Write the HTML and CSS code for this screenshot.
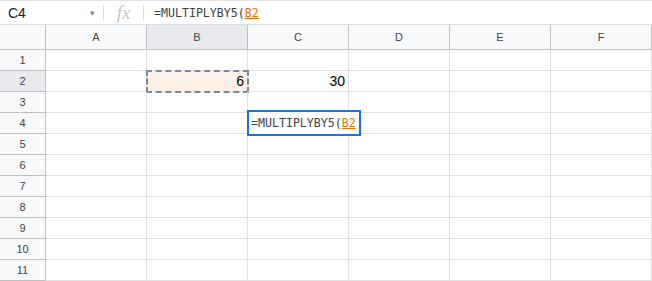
FILE: index.html
```html
<html>
<head>
<meta charset="utf-8"/>
<title>Sheet</title>
<link rel="stylesheet" href="styles.css">
</head>
<body>

<div class="fbar">
	<div class="namebox">C4<span class="caret">&#9662;</span></div>
	<div class="sep"></div>
	<div class="fx">fx</div>
	<div class="sep"></div>
	<div class="ftext">=MULTIPLYBY5(<span class="ref">B2</span></div>
</div>

<div class="grid">
	<div class="corner"></div>
	<div class="colh">A</div>
	<div class="colh sel">B</div>
	<div class="colh">C</div>
	<div class="colh">D</div>
	<div class="colh">E</div>
	<div class="colh">F</div>

	<div class="rowh">1</div>
	<div class="cell"></div><div class="cell"></div><div class="cell"></div><div class="cell"></div><div class="cell"></div><div class="cell"></div>

	<div class="rowh sel">2</div>
	<div class="cell"></div><div class="cell copy">6</div><div class="cell">30</div><div class="cell"></div><div class="cell"></div><div class="cell"></div>

	<div class="rowh">3</div>
	<div class="cell"></div><div class="cell"></div><div class="cell"></div><div class="cell"></div><div class="cell"></div><div class="cell"></div>

	<div class="rowh">4</div>
	<div class="cell"></div><div class="cell"></div><div class="cell active"><div class="editor">=MULTIPLYBY5(<span class="ref">B2</span></div></div><div class="cell"></div><div class="cell"></div><div class="cell"></div>

	<div class="rowh">5</div>
	<div class="cell"></div><div class="cell"></div><div class="cell"></div><div class="cell"></div><div class="cell"></div><div class="cell"></div>

	<div class="rowh">6</div>
	<div class="cell"></div><div class="cell"></div><div class="cell"></div><div class="cell"></div><div class="cell"></div><div class="cell"></div>

	<div class="rowh">7</div>
	<div class="cell"></div><div class="cell"></div><div class="cell"></div><div class="cell"></div><div class="cell"></div><div class="cell"></div>

	<div class="rowh">8</div>
	<div class="cell"></div><div class="cell"></div><div class="cell"></div><div class="cell"></div><div class="cell"></div><div class="cell"></div>

	<div class="rowh">9</div>
	<div class="cell"></div><div class="cell"></div><div class="cell"></div><div class="cell"></div><div class="cell"></div><div class="cell"></div>

	<div class="rowh">10</div>
	<div class="cell"></div><div class="cell"></div><div class="cell"></div><div class="cell"></div><div class="cell"></div><div class="cell"></div>

	<div class="rowh">11</div>
	<div class="cell"></div><div class="cell"></div><div class="cell"></div><div class="cell"></div><div class="cell"></div><div class="cell"></div>
</div>

</body>
</html>
```

FILE: styles.css
```css
body {
	margin: 0;
	font-family: "Liberation Sans", Arial, sans-serif;
	background: #fff;
	color: #000;
}
/* formula bar */
.fbar {
	display: flex;
	align-items: center;
	height: 23px;
	border-top: 1px solid #e0e0e0;
	border-bottom: 1px solid #dadce0;
}
.namebox {
	width: 103px;
	box-sizing: border-box;
	padding-left: 8px;
	font-size: 14px;
	color: #202124;
	display: flex;
	align-items: center;
}
.caret {
	margin-left: auto;
	margin-right: 8px;
	font-size: 9px;
	color: #80868b;
}
.sep {
	width: 1px;
	height: 16px;
	background: #dadce0;
}
.fx {
	width: 39px;
	text-align: center;
	font-family: "Liberation Serif", serif;
	font-style: italic;
	font-size: 19px;
	color: #c4c7c5;
}
.ftext {
	padding-left: 10px;
	font-family: "DejaVu Sans Mono", monospace;
	font-size: 11.6px;
	color: #3c4043;
}
.ref {
	color: #e8710a;
	text-decoration: underline;
}
/* grid */
.grid {
	display: grid;
	grid-template-columns: 46px repeat(6, 101px);
	grid-template-rows: 25px repeat(11, 21px);
}
.grid > div {
	box-sizing: border-box;
	border-right: 1px solid #e2e2e3;
	border-bottom: 1px solid #e2e2e3;
}
.corner {
	background: #f8f9fa;
	border-right: 1px solid #c0c0c0 !important;
	border-bottom: 1px solid #c0c0c0 !important;
}
.colh, .rowh {
	background: #f8f9fa;
	color: #444;
	font-size: 11px;
	display: flex;
	align-items: center;
	justify-content: center;
}
.colh {
	border-right-color: #c0c0c0 !important;
	border-bottom: 1px solid #c0c0c0 !important;
}
.rowh {
	border-right: 1px solid #c0c0c0 !important;
	border-bottom-color: #c0c0c0 !important;
}
.colh.sel, .rowh.sel {
	background: #e8eaed;
}
.cell {
	font-size: 14px;
	display: flex;
	align-items: center;
	justify-content: flex-end;
	padding-right: 3px;
	position: relative;
}
.cell.copy {
	background: #fdf1e7;
	outline: 2px dashed #7a889c;
	outline-offset: -1px;
}
.editor {
	position: absolute;
	left: -1px;
	top: -3px;
	height: 22px;
	padding: 0 3px 0 2px;
	border: 2px solid #1a73e8;
	background: #fff;
	display: flex;
	align-items: center;
	font-family: "DejaVu Sans Mono", monospace;
	font-size: 11.6px;
	color: #3c4043;
	white-space: nowrap;
	z-index: 2;
}
```
